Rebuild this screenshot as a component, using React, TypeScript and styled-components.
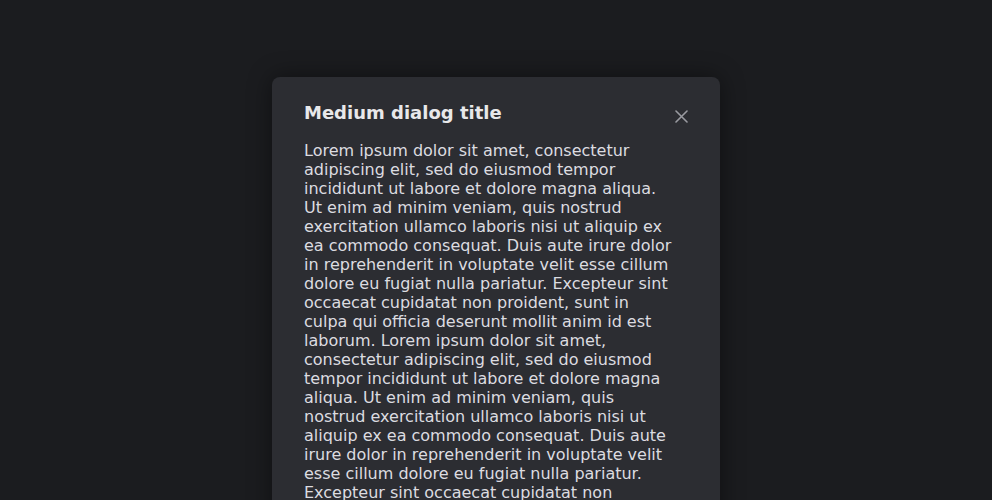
import styled, { createGlobalStyle } from "styled-components";

const GlobalStyle = createGlobalStyle`
  html, body {
    margin: 0;
    padding: 0;
    background: #1b1c1f;
    font-family: "DejaVu Sans", "Liberation Sans", sans-serif;
  }
`;

const Page = styled.div`
  width: 992px;
  height: 500px;
  overflow: hidden;
  display: flex;
  justify-content: center;
  align-items: flex-start;
  padding-top: 77px;
  box-sizing: border-box;
`;

const Dialog = styled.section`
  width: 448px;
  box-sizing: border-box;
  padding: 25px 32px 32px;
  border-radius: 8px;
  background: #2c2d32;
  box-shadow: 0 0 24px rgba(0, 0, 0, 0.45);
  color: #e4e4e7;
`;

const Header = styled.header`
  display: flex;
  align-items: flex-start;
  justify-content: space-between;
  margin-bottom: 18px;
`;

const Title = styled.h2`
  margin: 0;
  font-size: 18px;
  font-weight: 700;
  line-height: 21px;
  color: #e8e8ea;
`;

const CloseButton = styled.button`
  width: 13px;
  height: 13px;
  margin-top: 8px;
  padding: 0;
  border: 0;
  background: transparent;
  color: #9a9ba1;
  display: inline-flex;
  align-items: center;
  justify-content: center;
  cursor: pointer;
`;

const Body = styled.p`
  margin: 0;
  padding-right: 12px;
  font-size: 16px;
  line-height: 19px;
  color: #dcdce0;
`;

const text =
  "Lorem ipsum dolor sit amet, consectetur adipiscing elit, sed do eiusmod tempor incididunt ut labore et dolore magna aliqua. Ut enim ad minim veniam, quis nostrud exercitation ullamco laboris nisi ut aliquip ex ea commodo consequat. Duis aute irure dolor in reprehenderit in voluptate velit esse cillum dolore eu fugiat nulla pariatur. Excepteur sint occaecat cupidatat non proident, sunt in culpa qui officia deserunt mollit anim id est laborum. ";

export default function App() {
  return (
    <Page>
      <GlobalStyle />
      <Dialog role="dialog" aria-labelledby="dlg-title">
        <Header>
          <Title id="dlg-title">Medium dialog title</Title>
          <CloseButton type="button" aria-label="Close">
            <svg width="13" height="13" viewBox="0 0 13 13" fill="none">
              <path d="M1 1L12 12M12 1L1 12" stroke="currentColor" strokeWidth="1.6" strokeLinecap="round" />
            </svg>
          </CloseButton>
        </Header>
        <Body>
          {text}
          {text}
        </Body>
      </Dialog>
    </Page>
  );
}
